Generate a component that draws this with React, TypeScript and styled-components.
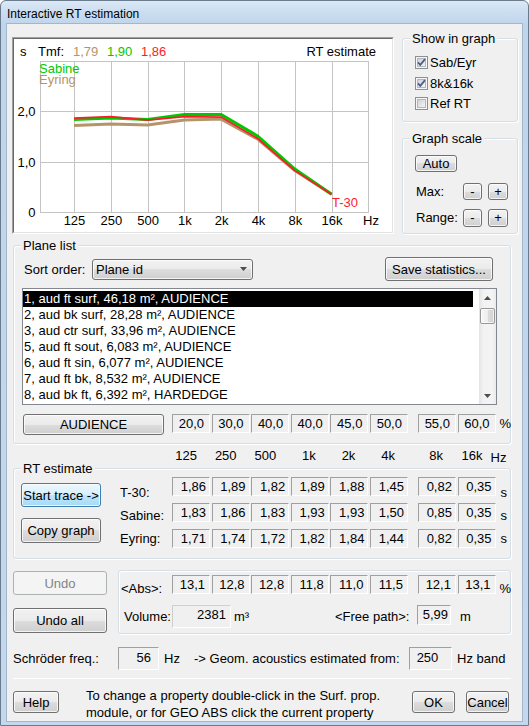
import React, { useId } from "react";
import styled, { createGlobalStyle } from "styled-components";

const FONT = `"Liberation Sans", Arial, sans-serif`;

const GlobalStyle = createGlobalStyle`
  html, body { margin: 0; padding: 0; background: #ffffff; }
  body { font-family: ${FONT}; font-size: 13px; color: #000; }
  * { box-sizing: border-box; }
  button { font-family: ${FONT}; font-size: 13px; }
`;

/* ---------- window chrome ---------- */
const Window = styled.div`
  width: 529px;
  height: 726px;
  border: 1px solid #6a7b8e;
  border-radius: 6px 6px 0 0;
  background: linear-gradient(180deg, #dce9f6 0px, #cadcf0 12px, #bfd5ec 24px, #c3d8ee 100%);
  padding: 0 6px 5px 6px;
  display: flex;
  flex-direction: column;
  overflow: hidden;
`;

const TitleBar = styled.div`
  height: 23px;
  padding-top: 2px;
  display: flex;
  align-items: center;
  font-size: 12px;
  color: #000;
  flex-shrink: 0;
`;

const Client = styled.div`
  flex: 1;
  background: #f0f0f0;
  display: flex;
  flex-direction: column;
  box-shadow: 0 0 0 1px #a3b7cc;
`;

/* ---------- generic controls ---------- */
const Btn = styled.button<{ $w: number; $h: number; $hot?: boolean }>`
  width: ${(p) => p.$w}px;
  height: ${(p) => p.$h}px;
  flex-shrink: 0;
  padding: 0;
  border: 1px solid ${(p) => (p.$hot ? "#3c7fb1" : "#707070")};
  border-radius: 3px;
  color: #000;
  background: ${(p) =>
    p.$hot
      ? "linear-gradient(180deg, #eaf6fd 0%, #d9f0fc 50%, #bee6fd 50%, #a7d9f5 100%)"
      : "linear-gradient(180deg, #f2f2f2 0%, #ebebeb 50%, #dddddd 50%, #cfcfcf 100%)"};
  box-shadow: inset 0 0 0 1px rgba(255, 255, 255, 0.75);
  white-space: nowrap;
  &:disabled {
    border-color: #adb2b5;
    background: #f4f4f4;
    color: #838383;
    box-shadow: none;
  }
`;

const ValueBox = styled.div<{ $pad?: number; $split?: boolean }>`
  width: 38px;
  height: 19px;
  flex-shrink: 0;
  margin-left: ${(p) => (p.$split ? 8.4 : 0)}px;
  border: 1px solid;
  border-color: #a0a0a0 #ffffff #ffffff #a0a0a0;
  line-height: 17px;
  text-align: right;
  padding-right: ${(p) => p.$pad ?? 3}px;
  white-space: nowrap;
`;

const BandStrip = styled.div`
  display: flex;
  gap: 1.6px;
  flex-shrink: 0;
`;

function Bands({ values, pad }: { values: string[]; pad?: number }) {
  return (
    <BandStrip>
      {values.map((v, i) => (
        <ValueBox key={i} $pad={pad} $split={i === 6}>
          {v}
        </ValueBox>
      ))}
    </BandStrip>
  );
}

const Group = styled.div<{ $w: number; $h: number }>`
  position: relative;
  width: ${(p) => p.$w}px;
  height: ${(p) => p.$h}px;
  flex-shrink: 0;
  border: 1px solid #d5dfe5;
  border-radius: 3px;
  box-shadow: inset 1px 1px 0 #ffffff, 1px 1px 0 #ffffff;
`;

const Caption = styled.span`
  position: absolute;
  top: -8px;
  left: 7px;
  padding: 0 2px;
  line-height: 15px;
  background: #f0f0f0;
  white-space: nowrap;
`;

/* ---------- checkbox ---------- */
const CheckRow = styled.div`
  height: 20.5px;
  display: flex;
  align-items: center;
  gap: 2px;
`;

function CheckBox({ checked }: { checked?: boolean }) {
  const id = useId().replace(/:/g, "");
  return (
    <svg width="13" height="13" viewBox="0 0 13 13">
      <defs>
        <linearGradient id={`f${id}`} x1="0" y1="0" x2="1" y2="1">
          <stop offset="0" stopColor="#cbcfd5" />
          <stop offset="1" stopColor="#f7f7f7" />
        </linearGradient>
      </defs>
      <rect x="0.5" y="0.5" width="12" height="12" fill="#f6f6f6" stroke="#8e8f8f" />
      <rect x="2.5" y="2.5" width="8" height="8" fill={`url(#f${id})`} stroke="#b3b8bd" />
      {checked && (
        <path d="M3 6.3 L5.3 8.8 L10 3.2" fill="none" stroke="#4a5f8e" strokeWidth="1.8" />
      )}
    </svg>
  );
}

/* ---------- chart ---------- */
const BX = [74, 110.8, 147.6, 184.4, 221.2, 258, 294.8, 331.6];
const yv = (v: number) => 212 - 50.5 * v;
const pts = (vals: number[]) => vals.map((v, i) => `${BX[i]},${yv(v).toFixed(1)}`).join(" ");
const T30 = [1.86, 1.89, 1.82, 1.89, 1.88, 1.45, 0.82, 0.35];
const SAB = [1.83, 1.86, 1.83, 1.93, 1.93, 1.5, 0.85, 0.35];
const EYR = [1.71, 1.74, 1.72, 1.82, 1.84, 1.44, 0.82, 0.35];
const BANDS = ["125", "250", "500", "1k", "2k", "4k", "8k", "16k"];

const TAN = "#b4946a";
const GREEN = "#00c800";
const RED = "#ff1a2a";

function RtChart() {
  return (
    <svg width="378" height="193" viewBox="14 39 378 193" style={{ display: "block" }}>
      <g stroke="#c4c4c4" strokeWidth="1" fill="none" shapeRendering="crispEdges">
        <rect x="40.5" y="61.5" width="327.5" height="150.5" />
        {BX.map((x) => (
          <line key={x} x1={Math.round(x) + 0.5} x2={Math.round(x) + 0.5} y1="61" y2="212" />
        ))}
        <line x1="40" x2="368" y1="111.5" y2="111.5" />
        <line x1="40" x2="368" y1="162.5" y2="162.5" />
      </g>
      <g fontFamily={FONT} fontSize="13">
        <text x="20" y="56" fill="#000">s</text>
        <text x="38" y="56" fill="#000">Tmf:</text>
        <text x="73" y="56" fill={TAN}>1,79</text>
        <text x="107" y="56" fill={GREEN}>1,90</text>
        <text x="141" y="56" fill={RED}>1,86</text>
        <text x="376" y="56" fill="#000" textAnchor="end">RT estimate</text>
        <text x="39" y="73" fill={GREEN}>Sabine</text>
        <text x="39" y="84" fill={TAN}>Eyring</text>
        <text x="35.5" y="115.7" fill="#000" textAnchor="end">2,0</text>
        <text x="35.5" y="166.5" fill="#000" textAnchor="end">1,0</text>
        <text x="35.5" y="216.5" fill="#000" textAnchor="end">0</text>
        {BANDS.map((b, i) => (
          <text key={b} x={BX[i] + 0.5} y="224.5" textAnchor="middle" fill="#000">
            {b}
          </text>
        ))}
        <text x="363" y="224.5" fill="#000">Hz</text>
        <text x="332" y="206.7" fill={RED}>T-30</text>
      </g>
      <g fill="none" strokeLinejoin="round">
        <polyline points={pts(EYR)} stroke={TAN} strokeWidth="3" />
        <polyline points={pts(SAB)} stroke={GREEN} strokeWidth="3" />
        <polyline points={pts(T30)} stroke={RED} strokeWidth="1.7" />
      </g>
    </svg>
  );
}

/* ---------- top row ---------- */
const TopRow = styled.div`
  margin-top: 13px;
  display: flex;
  align-items: flex-start;
`;

const GraphFrame = styled.div`
  margin-left: 5px;
  width: 382px;
  height: 197px;
  flex-shrink: 0;
  border: 1px solid;
  border-color: #a0a0a0 #ffffff #ffffff #a0a0a0;
`;

const GraphInner = styled.div`
  width: 100%;
  height: 100%;
  border: 1px solid;
  border-color: #696969 #e3e3e3 #e3e3e3 #696969;
  background: #ffffff;
`;

const SideColumn = styled.div`
  margin-left: 8px;
  margin-top: 1px;
  width: 116px;
  display: flex;
  flex-direction: column;
`;

const ShowGroup = styled(Group)`
  padding: 13.5px 0 0 12px;
  display: flex;
  flex-direction: column;
`;

const ScaleGroup = styled(Group)`
  margin-top: 16px;
  padding: 16px 0 0 12px;
  display: flex;
  flex-direction: column;
  align-items: flex-start;
`;

const ScaleRow = styled.div<{ $mt: number }>`
  margin-top: ${(p) => p.$mt}px;
  height: 17px;
  display: flex;
  align-items: center;
`;

const ScaleLabel = styled.span`
  width: 48px;
  padding-left: 1px;
`;

const ScaleGap = styled.span`
  width: 6px;
`;

/* ---------- plane list ---------- */
const PlaneGroup = styled(Group)`
  margin: 11px 0 0 6px;
  padding: 11px 17px 0 8px;
  display: flex;
  flex-direction: column;
`;

const SortRow = styled.div`
  height: 24px;
  display: flex;
  align-items: center;
`;

const SortLabel = styled.span`
  margin-left: 2px;
  width: 68px;
`;

const Combo = styled.div`
  width: 161px;
  height: 21px;
  border: 1px solid #707070;
  border-radius: 3px;
  background: linear-gradient(180deg, #f2f2f2 0%, #ebebeb 50%, #dddddd 50%, #cfcfcf 100%);
  box-shadow: inset 0 0 0 1px rgba(255, 255, 255, 0.75);
  display: flex;
  align-items: center;
  justify-content: space-between;
  padding: 0 5px 0 3px;
`;

const SaveButton = styled(Btn)`
  margin-left: auto;
`;

const ListBox = styled.div`
  margin-top: 7px;
  width: 475px;
  height: 117px;
  border: 1px solid #828790;
  background: #ffffff;
  display: flex;
`;

const ListRows = styled.div`
  flex: 1;
  padding-top: 2px;
  margin-right: 6px;
  overflow: hidden;
`;

const ListItem = styled.div<{ $selected?: boolean }>`
  height: 16px;
  line-height: 16px;
  padding-left: 1px;
  white-space: nowrap;
  background: ${(p) => (p.$selected ? "#000000" : "transparent")};
  color: ${(p) => (p.$selected ? "#ffffff" : "#000000")};
`;

const ScrollBar = styled.div`
  width: 17px;
  display: flex;
  flex-direction: column;
  align-items: center;
  background: linear-gradient(90deg, #e3e3e3 0%, #f2f2f2 25%, #f4f4f4 75%, #ebebeb 100%);
`;

const ScrollArrow = styled.div`
  width: 17px;
  height: 17px;
  display: flex;
  align-items: center;
  justify-content: center;
  flex-shrink: 0;
`;

const ScrollThumb = styled.div`
  margin-top: 2px;
  width: 15px;
  height: 16px;
  border: 1px solid #979797;
  border-radius: 2px;
  background: linear-gradient(90deg, #f7f7f7 0%, #ededed 50%, #dcdcdc 51%, #d2d2d2 100%);
  box-shadow: inset 0 0 0 1px rgba(255, 255, 255, 0.7);
`;

const ScrollTrack = styled.div`
  flex: 1;
`;

const AudRow = styled.div`
  margin-top: 9px;
  display: flex;
  align-items: flex-start;
`;

const AudButton = styled(Btn)`
  margin-left: 1px;
  margin-right: 8px;
`;

const Unit = styled.span<{ $ml: number; $dy?: number }>`
  margin-left: ${(p) => p.$ml}px;
  line-height: 19px;
  padding-top: ${(p) => p.$dy ?? 0}px;
  white-space: nowrap;
`;

/* ---------- RT estimate ---------- */
const RtHeader = styled.div`
  margin: 4px 0 0 165px;
  height: 15px;
  display: flex;
  line-height: 15px;
`;

const HeadCell = styled.span<{ $split?: boolean }>`
  width: 38px;
  flex-shrink: 0;
  margin-left: ${(p) => (p.$split ? 8.4 : 0)}px;
  text-align: right;
  padding-right: 13px;
`;

const HeadStrip = styled.div`
  display: flex;
  gap: 1.6px;
`;

const RtGroup = styled(Group)`
  margin: 5px 0 0 6px;
  display: flex;
  align-items: flex-start;
`;

const RtButtons = styled.div`
  margin-left: 7px;
  padding-top: 14px;
  display: flex;
  flex-direction: column;
  gap: 11px;
`;

const RtRows = styled.div`
  margin-left: 19px;
  padding-top: 8px;
  display: flex;
  flex-direction: column;
  gap: 7px;
`;

const RtRow = styled.div`
  height: 19px;
  display: flex;
  align-items: flex-start;
`;

const RowLabel = styled.span<{ $w: number; $ml?: number; $dy?: number }>`
  width: ${(p) => p.$w}px;
  margin-left: ${(p) => p.$ml ?? 0}px;
  flex-shrink: 0;
  line-height: 19px;
  padding-top: ${(p) => p.$dy ?? 0}px;
  white-space: nowrap;
`;

/* ---------- bottom ---------- */
const UndoRow = styled.div`
  margin-top: 11px;
  display: flex;
  align-items: flex-start;
`;

const UndoColumn = styled.div`
  margin: 1px 0 0 6px;
  display: flex;
  flex-direction: column;
  gap: 13px;
`;

const AbsGroup = styled(Group)`
  margin-left: 11px;
  padding-top: 4px;
  display: flex;
  flex-direction: column;
`;

const AbsRow = styled.div`
  height: 19px;
  display: flex;
  align-items: flex-start;
`;

const VolRow = styled.div`
  margin-top: 11px;
  height: 23px;
  display: flex;
  align-items: center;
`;

const VolumeBox = styled.div`
  width: 59px;
  height: 23px;
  flex-shrink: 0;
  border: 1px solid;
  border-color: #cfcfcf #ffffff #ffffff #cfcfcf;
  text-align: right;
  padding-right: 4px;
  line-height: 18px;
`;

const FreeBox = styled.div`
  width: 34px;
  height: 20px;
  flex-shrink: 0;
  align-self: flex-start;
  border: 1px solid;
  border-color: #a0a0a0 #ffffff #ffffff #a0a0a0;
  text-align: right;
  padding-right: 2px;
  line-height: 17px;
`;

const SchroederRow = styled.div`
  margin-top: 13px;
  height: 23px;
  display: flex;
  align-items: center;
`;

const FieldBox = styled.div<{ $w: number; $center?: boolean }>`
  width: ${(p) => p.$w}px;
  height: 23px;
  flex-shrink: 0;
  border: 1px solid;
  border-color: #a0a0a0 #ffffff #ffffff #a0a0a0;
  line-height: 19px;
  text-align: ${(p) => (p.$center ? "center" : "right")};
  padding: ${(p) => (p.$center ? "0 6px 0 0" : "0 7px 0 0")};
`;

const Separator = styled.div`
  margin: 8px 0 0 6px;
  width: 498px;
  height: 1px;
  background: #ffffff;
  flex-shrink: 0;
`;

const FooterRow = styled.div`
  margin-top: 8px;
  display: flex;
  align-items: flex-start;
`;

const FooterButton = styled(Btn)`
  margin-top: 4px;
`;

const HelpText = styled.div`
  margin-left: 27px;
  line-height: 17px;
  white-space: nowrap;
`;

const OkButton = styled(FooterButton)`
  margin-left: auto;
`;

const CancelButton = styled(FooterButton)`
  margin-left: 11px;
  margin-right: 13px;
`;

/* ---------- data ---------- */
const PLANES = [
  "1, aud ft surf, 46,18 m², AUDIENCE",
  "2, aud bk surf, 28,28 m², AUDIENCE",
  "3, aud ctr surf, 33,96 m², AUDIENCE",
  "5, aud ft sout, 6,083 m², AUDIENCE",
  "6, aud ft sin, 6,077 m², AUDIENCE",
  "7, aud ft bk, 8,532 m², AUDIENCE",
  "8, aud bk ft, 6,392 m², HARDEDGE",
];
const AUD = ["20,0", "30,0", "40,0", "40,0", "45,0", "50,0", "55,0", "60,0"];
const ABS = ["13,1", "12,8", "12,8", "11,8", "11,0", "11,5", "12,1", "13,1"];
const RT_ROWS = [
  { label: "T-30:", dy: 6, values: ["1,86", "1,89", "1,82", "1,89", "1,88", "1,45", "0,82", "0,35"] },
  { label: "Sabine:", dy: 3, values: ["1,83", "1,86", "1,83", "1,93", "1,93", "1,50", "0,85", "0,35"] },
  { label: "Eyring:", dy: 0, values: ["1,71", "1,74", "1,72", "1,82", "1,84", "1,44", "0,82", "0,35"] },
];

function Arrow({ down }: { down?: boolean }) {
  return (
    <svg width="7" height="4" viewBox="0 0 7 4">
      <polygon points={down ? "0,0 7,0 3.5,4" : "0,4 7,4 3.5,0"} fill="#4d4d4d" />
    </svg>
  );
}

export default function App() {
  return (
    <>
      <GlobalStyle />
      <Window>
        <TitleBar>Interactive RT estimation</TitleBar>
        <Client>
          <TopRow>
            <GraphFrame>
              <GraphInner>
                <RtChart />
              </GraphInner>
            </GraphFrame>
            <SideColumn>
              <ShowGroup $w={116} $h={84}>
                <Caption>Show in graph</Caption>
                <CheckRow>
                  <CheckBox checked />
                  <span>Sab/Eyr</span>
                </CheckRow>
                <CheckRow>
                  <CheckBox checked />
                  <span>8k&amp;16k</span>
                </CheckRow>
                <CheckRow>
                  <CheckBox />
                  <span>Ref RT</span>
                </CheckRow>
              </ShowGroup>
              <ScaleGroup $w={116} $h={96}>
                <Caption>Graph scale</Caption>
                <Btn $w={42} $h={17}>Auto</Btn>
                <ScaleRow $mt={11}>
                  <ScaleLabel>Max:</ScaleLabel>
                  <Btn $w={19} $h={17}>-</Btn>
                  <ScaleGap />
                  <Btn $w={20} $h={17}>+</Btn>
                </ScaleRow>
                <ScaleRow $mt={9}>
                  <ScaleLabel>Range:</ScaleLabel>
                  <Btn $w={19} $h={18}>-</Btn>
                  <ScaleGap />
                  <Btn $w={20} $h={18}>+</Btn>
                </ScaleRow>
              </ScaleGroup>
            </SideColumn>
          </TopRow>

          <PlaneGroup $w={498} $h={199}>
            <Caption>Plane list</Caption>
            <SortRow>
              <SortLabel>Sort order:</SortLabel>
              <Combo>
                <span>Plane id</span>
                <Arrow down />
              </Combo>
              <SaveButton $w={108} $h={24}>Save statistics...</SaveButton>
            </SortRow>
            <ListBox>
              <ListRows>
                {PLANES.map((p, i) => (
                  <ListItem key={p} $selected={i === 0}>
                    {p}
                  </ListItem>
                ))}
              </ListRows>
              <ScrollBar>
                <ScrollArrow>
                  <Arrow />
                </ScrollArrow>
                <ScrollThumb />
                <ScrollTrack />
                <ScrollArrow>
                  <Arrow down />
                </ScrollArrow>
              </ScrollBar>
            </ListBox>
            <AudRow>
              <AudButton $w={141} $h={21}>AUDIENCE</AudButton>
              <Bands values={AUD} pad={5} />
              <Unit $ml={4}>%</Unit>
            </AudRow>
          </PlaneGroup>

          <RtHeader>
            <HeadStrip>
              {BANDS.map((b, i) => (
                <HeadCell key={b} $split={i === 6}>
                  {b}
                </HeadCell>
              ))}
            </HeadStrip>
            <Unit $ml={-5}>Hz</Unit>
          </RtHeader>

          <RtGroup $w={498} $h={91}>
            <Caption>RT estimate</Caption>
            <RtButtons>
              <Btn $w={80} $h={24} $hot>Start trace -&gt;</Btn>
              <Btn $w={80} $h={25}>Copy graph</Btn>
            </RtButtons>
            <RtRows>
              {RT_ROWS.map((r) => (
                <RtRow key={r.label}>
                  <RowLabel $w={52} $dy={r.dy}>{r.label}</RowLabel>
                  <Bands values={r.values} pad={3} />
                  <Unit $ml={5} $dy={r.dy}>s</Unit>
                </RtRow>
              ))}
            </RtRows>
          </RtGroup>

          <UndoRow>
            <UndoColumn>
              <Btn $w={94} $h={24} disabled>Undo</Btn>
              <Btn $w={94} $h={25}>Undo all</Btn>
            </UndoColumn>
            <AbsGroup $w={393} $h={64}>
              <AbsRow>
                <RowLabel $w={51} $ml={2} $dy={4}>&lt;Abs&gt;:</RowLabel>
                <Bands values={ABS} pad={4} />
                <Unit $ml={4} $dy={4}>%</Unit>
              </AbsRow>
              <VolRow>
                <RowLabel $w={48} $ml={5}>Volume:</RowLabel>
                <VolumeBox>2381</VolumeBox>
                <RowLabel $w={101} $ml={3}>m³</RowLabel>
                <RowLabel $w={82}>&lt;Free path&gt;:</RowLabel>
                <FreeBox>5,99</FreeBox>
                <RowLabel $w={20} $ml={9}>m</RowLabel>
              </VolRow>
            </AbsGroup>
          </UndoRow>

          <SchroederRow>
            <RowLabel $w={105} $ml={6}>Schröder freq.:</RowLabel>
            <FieldBox $w={41}>56</FieldBox>
            <RowLabel $w={30} $ml={5}>Hz</RowLabel>
            <RowLabel $w={215}>-&gt; Geom. acoustics estimated from:</RowLabel>
            <FieldBox $w={43} $center>250</FieldBox>
            <RowLabel $w={60} $ml={5}>Hz band</RowLabel>
          </SchroederRow>

          <Separator />

          <FooterRow>
            <FooterButton $w={46} $h={22} style={{ marginLeft: 6 }}>Help</FooterButton>
            <HelpText>
              To change a property double-click in the Surf. prop.
              <br />
              module, or for GEO ABS click the current property
            </HelpText>
            <OkButton $w={43} $h={22}>OK</OkButton>
            <CancelButton $w={43} $h={22}>Cancel</CancelButton>
          </FooterRow>
        </Client>
      </Window>
    </>
  );
}
